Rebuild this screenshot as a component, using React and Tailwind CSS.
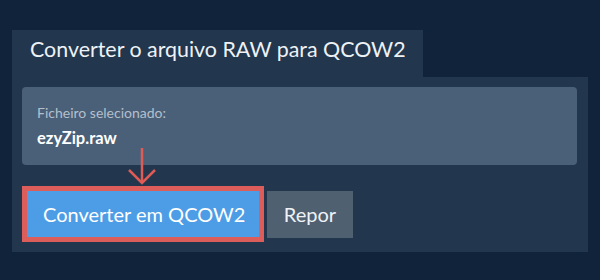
export default function App() {
  return (
    <div className="min-h-screen w-full bg-[#11233a] pl-[12px] pt-[30px] font-['Lato',sans-serif]">
      <div className="flex h-[47px] w-[411px] bg-[#22364d] pl-[18px] pt-[5px]">
        <h1 className="text-[21.4px] leading-[28px] text-[#eef2f6]">Converter o arquivo RAW para QCOW2</h1>
      </div>
      <div className="relative w-[576px] bg-[#22364d] px-[10px] pb-[10px] pt-[10px]">
        <div className="w-[555px] rounded-[4px] bg-[#4a6079] px-[15px] pb-[17px] pt-[17px]">
          <p className="text-[14px] leading-[18px] text-[#b4bfcb]">Ficheiro selecionado:</p>
          <p className="mt-[6px] text-[16.5px] font-bold leading-[20px] text-white">ezyZip.raw</p>
        </div>
        <svg
          className="absolute left-[116px] top-[71px]"
          width="30"
          height="38"
          viewBox="0 0 30 38"
          fill="none"
          stroke="#de5b56"
          strokeWidth="2.5"
        >
          <path d="M14 0 V35" />
          <path d="M1 22 L14 35 L27 22" />
        </svg>
        <div className="mt-[21px] flex items-center gap-[3px]">
          <button
            type="button"
            className="flex h-[56px] w-[242px] items-center border-[5px] border-[#dc5d59] bg-[#4d9de6] pl-[16px] text-[20px] leading-[28px] text-white"
          >
            Converter em QCOW2
          </button>
          <button
            type="button"
            className="flex h-[47px] w-[86px] items-center justify-center bg-[#4f6070] text-[20px] leading-[28px] text-[#eef2f6]"
          >
            Repor
          </button>
        </div>
      </div>
    </div>
  );
}
